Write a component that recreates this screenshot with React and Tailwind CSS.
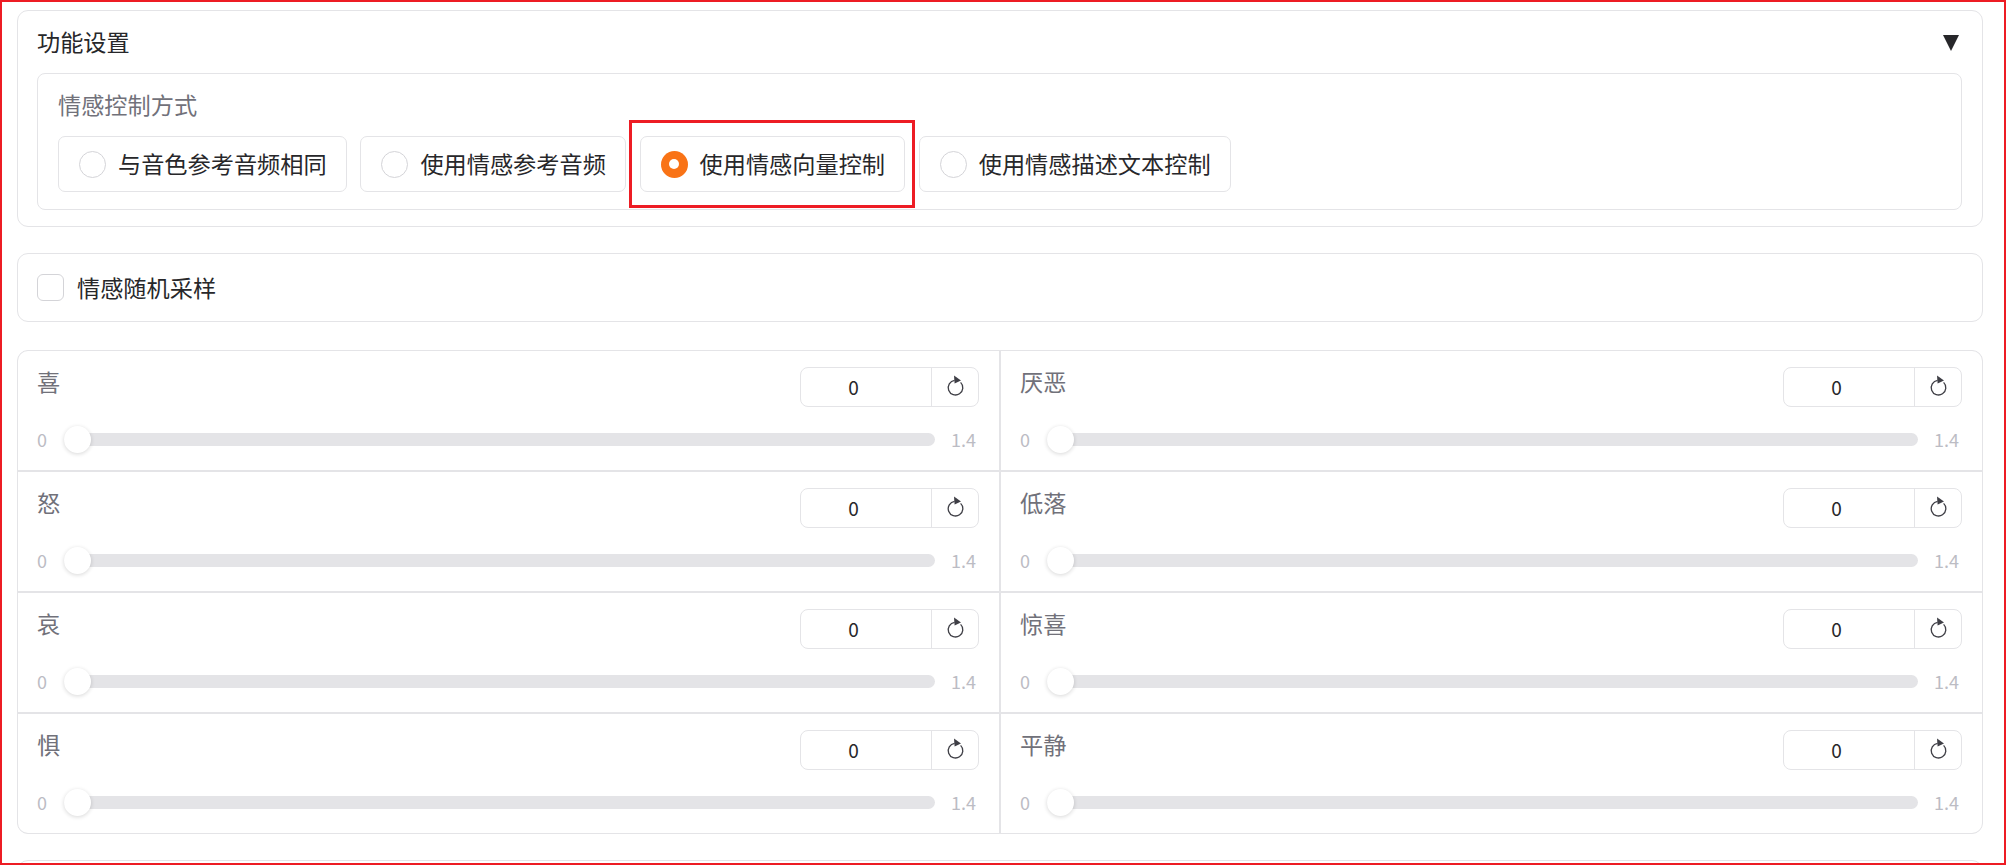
const font = { fontFamily: '"Noto Sans CJK SC", "Noto Sans", sans-serif' };

function Radio({ label, checked }) {
  return (
    <label className="flex h-[56px] items-center gap-[12px] rounded-[7px] border border-[#e4e4e7] bg-white pl-[20px] pr-[19px] text-[23.2px] leading-none text-[#27272a]">
      {checked ? (
        <span className="flex h-[27px] w-[27px] items-center justify-center rounded-full bg-[#f97316]">
          <span className="h-[10px] w-[10px] rounded-full bg-white" />
        </span>
      ) : (
        <span className="h-[27px] w-[27px] rounded-full border border-[#d4d4d8] bg-white" />
      )}
      <span>{label}</span>
    </label>
  );
}

function ResetIcon() {
  return (
    <svg width="32" height="32" viewBox="0 0 32 32" className="mt-[-3px]">
      <path d="M21.6 12.4A7.3 7.3 0 1 1 15.6 10.4" fill="none" stroke="#3f3f46" strokeWidth="1.3" />
      <path d="M15 5.5 15.6 13.6 22 10.4z" fill="#3f3f46" />
    </svg>
  );
}

function SliderCell({ label }) {
  return (
    <div className="bg-white pl-[19px] pr-[20px] pt-[16px]">
      <div className="flex h-[40px] items-start justify-between">
        <span className="mt-[-1px] text-[23.2px] leading-[30px] text-[#71717a]">{label}</span>
        <div className="flex h-[40px] w-[179px] rounded-[8px] border border-[#e4e4e7]">
          <span className="flex w-[130px] items-center justify-center pr-[25px] text-[19px] text-[#27272a]">0</span>
          <span className="flex flex-1 items-center justify-center border-l border-[#e4e4e7]">
            <ResetIcon />
          </span>
        </div>
      </div>
      <div className="mt-[18.5px] flex h-[27px] items-center">
        <span className="w-[27px] text-[18px] leading-none text-[#bcbcc4]">0</span>
        <div className="relative h-[13px] flex-1 rounded-full bg-[#e4e4e7]">
          <span className="absolute left-0 top-[-7px] h-[27px] w-[27px] rounded-full bg-white shadow-[0_1px_4px_rgba(0,0,0,0.16)]" />
        </div>
        <span className="ml-[16px] mr-[3px] w-[25px] text-right text-[18px] leading-none text-[#bcbcc4]">1.4</span>
      </div>
    </div>
  );
}

export default function App() {
  const left = ['喜', '厌恶', '怒', '低落', '哀', '惊喜', '惧', '平静'];
  return (
    <div className="h-[865px] w-[2006px] overflow-hidden border-2 border-[#ed1c24] bg-white" style={font}>
      <div className="ml-[15px] w-[1966px] pt-[8px]">
        <section className="h-[217px] rounded-[11px] border border-[#e4e4e7] pl-[19px] pr-[20px] pt-[16px]">
          <div className="flex h-[30px] items-center justify-between text-[23.2px] leading-none text-[#27272a]">
            <span>功能设置</span>
            <svg width="16" height="16" viewBox="0 0 16 16" className="mr-[3px] mt-[1px]">
              <path d="M0 0h16L8 16z" fill="#27272a" />
            </svg>
          </div>
          <div className="relative mt-[16px] h-[137px] rounded-[8px] border border-[#e4e4e7] pl-[20px] pr-[20px] pt-[15px]">
            <div className="h-[30px] text-[23.2px] leading-[30px] text-[#71717a]">情感控制方式</div>
            <div className="mt-[17px] flex gap-[13.7px]">
              <Radio label="与音色参考音频相同" />
              <Radio label="使用情感参考音频" />
              <Radio label="使用情感向量控制" checked />
              <Radio label="使用情感描述文本控制" />
            </div>
            <div className="pointer-events-none absolute left-[591px] top-[46px] h-[88px] w-[286px] border-[3px] border-[#ed1c24]" />
          </div>
        </section>

        <section className="mt-[26px] flex h-[69px] items-center gap-[13px] rounded-[11px] border border-[#e4e4e7] pb-[1px] pl-[19px] pr-[20px] text-[23.2px] text-[#27272a]">
          <span className="h-[27px] w-[27px] rounded-[6px] border border-[#d4d4d8] bg-white" />
          <span>情感随机采样</span>
        </section>

        <section className="mt-[28px] grid h-[484px] grid-cols-2 grid-rows-4 gap-[2px] overflow-hidden rounded-[11px] border border-[#e4e4e7] bg-[#e4e4e7]">
          {left.map((l) => (
            <SliderCell key={l} label={l} />
          ))}
        </section>

        <section className="mt-[26px] h-[40px] rounded-[11px] border border-[#e4e4e7]" />
      </div>
    </div>
  );
}
